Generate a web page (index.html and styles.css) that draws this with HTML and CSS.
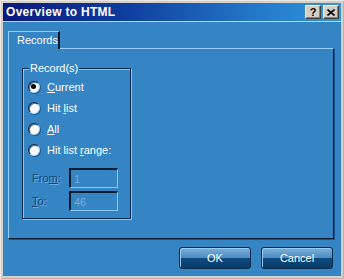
FILE: index.html
```html
<!DOCTYPE html>
<html lang="en">
  <head>
    <meta charset="UTF-8" />
    <meta name="viewport" content="width=device-width, initial-scale=1.0" />
    <title>Overview to HTML</title>
    <link rel="stylesheet" href="styles.css">
  </head>
  <body>
    <div class="window">
      <div class="titlebar">
        <span class="title">Overview to HTML</span>
        <div class="title-btns">
          <span class="tbtn">?</span>
          <span class="tbtn">
            <svg width="8" height="7" viewBox="0 0 8 7">
              <path d="M0.5 0.5 L7.5 6.5 M7.5 0.5 L0.5 6.5" stroke="#000" stroke-width="1.6" />
            </svg>
          </span>
        </div>
      </div>

      <div class="dialog">
        <div class="tabs">
          <div class="tab">Records</div>
        </div>

        <div class="panel">
          <div class="group">
            <span class="legend">Record(s)</span>

            <div class="radios">
              <label class="radio-row"><span class="radio checked"></span><span><u>C</u>urrent</span></label>
              <label class="radio-row"><span class="radio"></span><span>Hit <u>l</u>ist</span></label>
              <label class="radio-row"><span class="radio"></span><span><u>A</u>ll</span></label>
              <label class="radio-row"><span class="radio"></span><span>Hit list <u>r</u>ange:</span></label>
            </div>

            <div class="fields">
              <div class="field-row">
                <span class="field-label">Fro<u>m</u>:</span>
                <span class="field-input">1</span>
              </div>
              <div class="field-row">
                <span class="field-label"><u>T</u>o:</span>
                <span class="field-input">46</span>
              </div>
            </div>
          </div>
        </div>

        <div class="actions">
          <button class="btn">OK</button>
          <button class="btn">Cancel</button>
        </div>
      </div>
    </div>
  </body>
</html>
```

FILE: styles.css
```css
body {
  margin: 0;
  padding: 0;
  font-family: "Liberation Sans", Arial, sans-serif;
  font-size: 11px;
  background: #d4d0c8;
}

.window {
  box-sizing: border-box;
  width: 344px;
  height: 279px;
  padding: 3px;
  background: #d4d0c8;
  box-shadow: inset 1px 1px 0 #ece9e4, inset -1px -1px 0 #b8b4ac;
  display: flex;
  flex-direction: column;
}

.titlebar {
  height: 18px;
  margin-bottom: 1px;
  padding: 0 2px 0 3px;
  display: flex;
  align-items: center;
  justify-content: space-between;
  background: linear-gradient(to right, #0a1a7c, #0e3c9c 35%, #2478c8 75%, #3096dc);
}

.title {
  color: #fff;
  font-weight: bold;
  font-size: 12px;
  letter-spacing: 0.3px;
}

.title-btns {
  display: flex;
  gap: 2px;
}

.tbtn {
  box-sizing: border-box;
  width: 16px;
  height: 14px;
  display: flex;
  align-items: center;
  justify-content: center;
  background: #d4d0c8;
  border-top: 1px solid #fff;
  border-left: 1px solid #fff;
  border-right: 1px solid #404040;
  border-bottom: 1px solid #404040;
  box-shadow: inset -1px -1px 0 #808080;
  font-weight: bold;
  font-size: 11px;
  color: #000;
}

.dialog {
  flex: 1;
  background: #3584c4;
  padding: 9px 7px 0 5px;
  display: flex;
  flex-direction: column;
}

.tabs {
  display: flex;
  height: 18px;
  position: relative;
  z-index: 1;
  margin-bottom: -1px;
}

.tab {
  box-sizing: border-box;
  width: 52px;
  height: 18px;
  padding: 2px 0 0 8px;
  color: #fff;
  background: #3584c4;
  border-top: 1px solid #9ccff6;
  border-left: 1px solid #9ccff6;
  border-right: 2px solid #06182e;
}

.panel {
  box-sizing: border-box;
  height: 191px;
  border-top: 1px solid #9ccff6;
  border-left: 1px solid #9ccff6;
  border-right: 1px solid #06182e;
  border-bottom: 1px solid #06182e;
  box-shadow: 1px 1px 0 #1c5488;
  padding: 19px 0 0 13px;
}

.group {
  position: relative;
  box-sizing: border-box;
  width: 109px;
  height: 151px;
  border: 1px solid #0b2a4e;
  box-shadow: 1px 1px 0 #8cc6f2, inset 1px 1px 0 #8cc6f2;
  padding: 7px 0 0 5px;
}

.legend {
  position: absolute;
  top: -7px;
  left: 6px;
  padding: 0 1px;
  line-height: 13px;
  background: #3584c4;
  color: #fff;
}

.radios {
  display: flex;
  flex-direction: column;
}

.radio-row {
  height: 21px;
  display: flex;
  align-items: center;
  gap: 7px;
  color: #fff;
}

.radio {
  box-sizing: border-box;
  width: 12px;
  height: 12px;
  border-radius: 50%;
  background: #fff;
  border-top: 1px solid #0a2240;
  border-left: 1px solid #0a2240;
  border-right: 1px solid #a8d4f6;
  border-bottom: 1px solid #a8d4f6;
  box-shadow: inset 1px 1px 0 #4a6e90, 1px 1px 0 #1e5a90;
  position: relative;
}

.radio.checked::after {
  content: "";
  position: absolute;
  left: 2px;
  top: 2px;
  width: 5px;
  height: 5px;
  border-radius: 50%;
  background: #000;
}

.fields {
  margin-top: 8px;
  display: flex;
  flex-direction: column;
  gap: 3px;
}

.field-row {
  display: flex;
  align-items: center;
  height: 20px;
}

.field-label {
  width: 37px;
  padding-left: 4px;
  color: #17446f;
  text-shadow: 1px 1px 0 #6aaee6;
}

.field-input {
  box-sizing: border-box;
  width: 49px;
  height: 20px;
  padding: 3px 0 0 3px;
  color: #80acd6;
  border-top: 2px solid #061a30;
  border-left: 2px solid #061a30;
  border-right: 1px solid #8cc6f2;
  border-bottom: 1px solid #8cc6f2;
}

.actions {
  margin-top: 8px;
  display: flex;
  justify-content: flex-end;
  gap: 10px;
  padding-right: 1px;
}

.btn {
  box-sizing: border-box;
  width: 72px;
  height: 22px;
  padding: 0;
  font-family: "Liberation Sans", Arial, sans-serif;
  font-size: 11px;
  color: #fff;
  border: 1px solid #0a2848;
  border-radius: 3px;
  background: linear-gradient(to bottom, #7ab2de, #4e8cc2 48%, #0e4a7e 52%, #0a3c6a);
  box-shadow: inset 1px 1px 0 #9ccbee;
}
```
